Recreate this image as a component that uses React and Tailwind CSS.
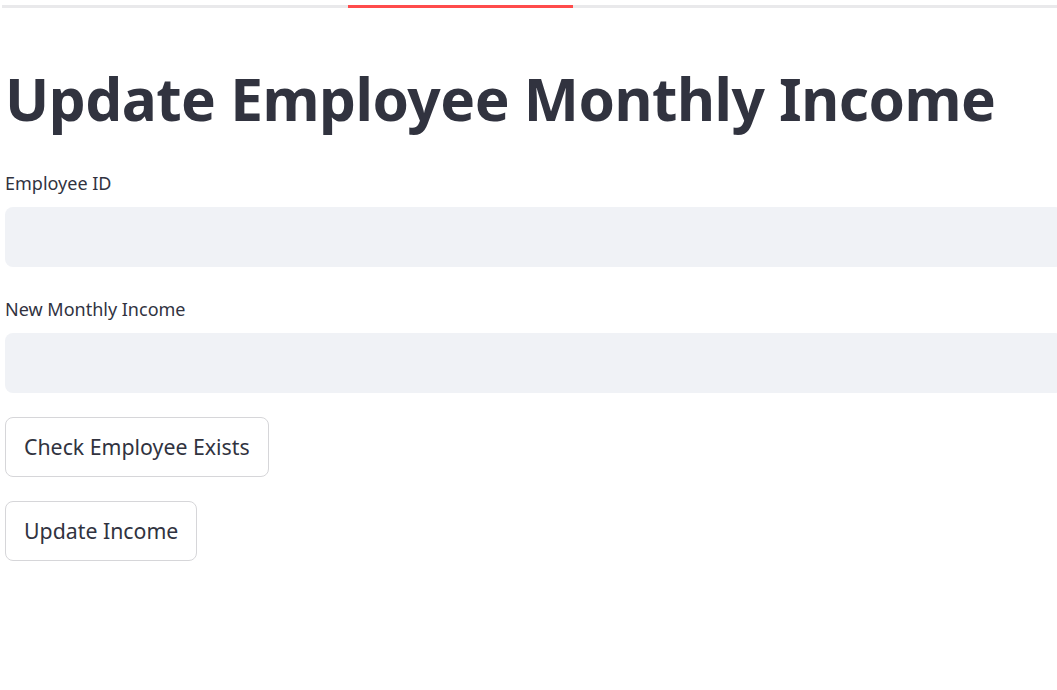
import React from 'react';

const font = { fontFamily: '"Noto Sans", "Liberation Sans", sans-serif' };

const Field = ({ label }) => (
  <div className="flex flex-col">
    <label className="text-[18px] leading-[26px] text-[#31333f] mb-[11px]">{label}</label>
    <input
      type="text"
      className="h-[60px] w-[1058px] rounded-[8px] bg-[#f0f2f6] outline-none px-4"
    />
  </div>
);

const Button = ({ children }) => (
  <button className="self-start h-[60px] px-[18px] rounded-[8px] border border-[#d6d6d9] bg-white text-[21.3px] text-[#31333f]">
    {children}
  </button>
);

export default function App() {
  return (
    <div className="min-h-[690px] bg-white overflow-hidden" style={font}>
      {/* top progress bar */}
      <div className="pt-[5px] pl-[2px]">
        <div className="flex h-[3px] bg-[#e9e9eb]">
          <div className="w-[346px]" />
          <div className="w-[225px] bg-[#ff4b4b]" />
        </div>
      </div>

      <div className="pl-[5px] pt-[58px]">
        <h1 className="text-[58.5px] leading-[64px] font-bold text-[#31333f] tracking-[-0.5px]">
          Update Employee Monthly Income
        </h1>

        <div className="mt-[40px] flex flex-col gap-[29px]">
          <Field label="Employee ID" />
          <Field label="New Monthly Income" />
        </div>

        <div className="mt-[24px] flex flex-col gap-[24px]">
          <Button>Check Employee Exists</Button>
          <Button>Update Income</Button>
        </div>
      </div>
    </div>
  );
}
